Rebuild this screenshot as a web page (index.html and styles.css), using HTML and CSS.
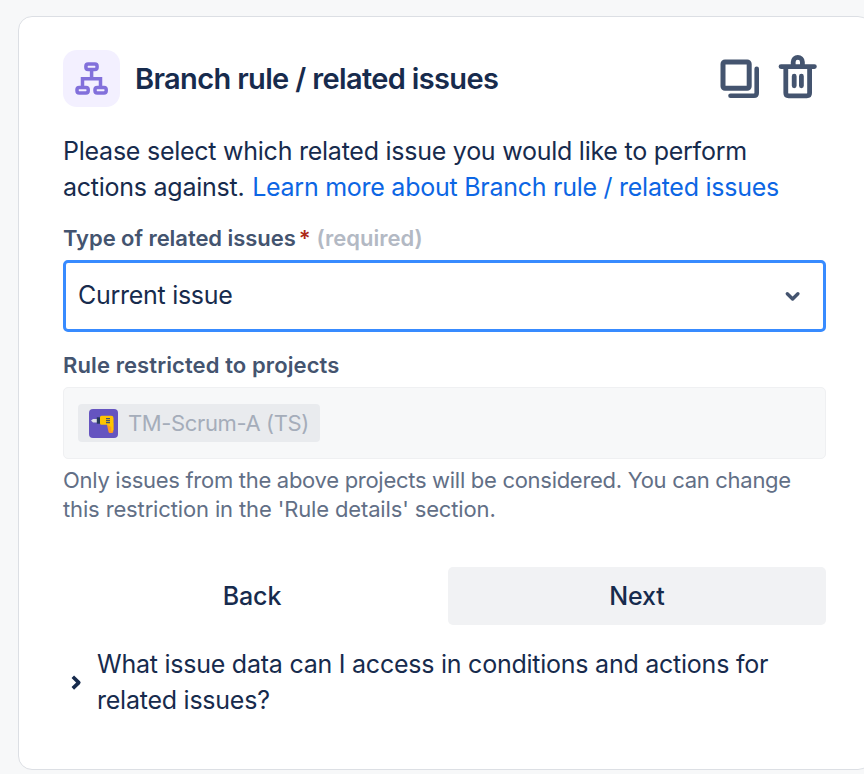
FILE: index.html
```html
<!DOCTYPE html>
<html lang="en">
<head>
<meta charset="utf-8">
<title>Branch rule / related issues</title>
<link rel="stylesheet" href="styles.css">
</head>
<body>
<main class="card">
  <header class="header">
    <span class="badge">
      <svg width="57" height="57" viewBox="0 0 57 57" fill="none" stroke="#8270db" stroke-width="3.5">
        <rect x="22.9" y="14" width="11.2" height="5.4" rx="2.2"/>
        <rect x="14" y="37.4" width="11.2" height="5.6" rx="2.2"/>
        <rect x="32" y="37.4" width="11.2" height="5.6" rx="2.2"/>
        <path d="M28.6 20v9M19.5 37v-8.2h18V37"/>
      </svg>
    </span>
    <h1 class="title">Branch rule / related issues</h1>
    <div class="actions">
      <button class="icon-btn" aria-label="Copy">
        <svg width="58" height="58" viewBox="0 0 58 58" fill="none" stroke="#44546f" stroke-width="5" stroke-linecap="round" stroke-linejoin="round">
          <rect x="13" y="12" width="26.2" height="26.2" rx="2"/>
          <path d="M46.7 18.7V43q0 2.7-2.7 2.7H20.5" stroke-width="4.6"/>
        </svg>
      </button>
      <button class="icon-btn" aria-label="Delete">
        <svg width="58" height="58" viewBox="0 0 58 58" fill="none" stroke="#44546f" stroke-width="4.8" stroke-linecap="round" stroke-linejoin="round">
          <path d="M13 16.6h33.4M17.8 17v26q0 2.8 2.8 2.8h18.2q2.8 0 2.8-2.8V17M25.2 15v-3a4.6 4.6 0 0 1 9.2 0V15M26.2 26.2v9.6M33.4 26.2v9.6"/>
        </svg>
      </button>
    </div>
  </header>

  <p class="intro">Please select which related issue you would like to perform<br>actions against. <a class="link" href="#">Learn more about Branch rule / related issues</a></p>

  <div class="label type-label">Type of related issues<span class="star">*</span><span class="required">(required)</span></div>
  <div class="select">
    <span class="select-value">Current issue</span>
    <svg width="20" height="20" viewBox="0 0 20 20" fill="none" stroke="#44546f" stroke-width="3.4" stroke-linecap="round" stroke-linejoin="round"><path d="M4.3 7.8l5.3 5.2 5.3-5.2"/></svg>
  </div>

  <div class="label project-label">Rule restricted to projects</div>
  <div class="projects">
    <span class="tag">
      <svg width="29" height="29" viewBox="0 0 29 29">
        <rect width="29" height="29" rx="4" fill="#6554c0"/>
        <path d="M2 11.6l2-1.6h4v3.4H4z" fill="#dfe1e6"/>
        <path d="M7.8 8.3h3.4v6.4H7.8z" fill="#253858"/>
        <path d="M18 14h6.3v8.5a1.6 1.6 0 0 1-1.6 1.6h-1.6a1.6 1.6 0 0 1-1.6-1.4L18 16z" fill="#ff991f"/>
        <path d="M12.5 6.8h9.8a2.2 2.2 0 0 1 2.2 2.2v12l-2.2 1.5V18L18 15.8h-5.5a1.5 1.5 0 0 1-1.5-1.5V8.3a1.5 1.5 0 0 1 1.5-1.5z" fill="#ffc400"/>
        <path d="M17 9.6h4M17 11.6h4M17 13.6h4" stroke="#42526e" stroke-width="1.1"/>
      </svg>
      <span>TM-Scrum-A (TS)</span>
    </span>
  </div>
  <p class="help">Only issues from the above projects will be considered. You can change<br><span class="help-end">this restriction in the 'Rule details' section.</span></p>

  <div class="buttons">
    <button class="btn">Back</button>
    <button class="btn btn-next">Next</button>
  </div>

  <div class="faq">
    <svg width="26" height="26" viewBox="0 0 26 26" fill="none" stroke="#172b4d" stroke-width="3.6" stroke-linejoin="round"><path d="M9.8 7.8l6 5.8-6 5.8"/></svg>
    <span class="faq-text">What issue data can I access in conditions and actions for<br>related issues?</span>
  </div>
</main>
</body>
</html>
```
FILE: styles.css
```css
* {
  box-sizing: border-box;
}

body {
  margin: 0;
  padding: 16px 0 0 18px;
  height: 774px;
  overflow: hidden;
  background: #f7f8f9;
  color: #172b4d;
  font-family: Inter, "Liberation Sans", sans-serif;
  font-size: 25px;
  white-space: nowrap;
}

h1, p {
  margin: 0;
}

button {
  padding: 0;
  border: 0;
  background: none;
  color: inherit;
  font: inherit;
}

svg {
  display: block;
  flex: none;
}

.card {
  width: 854px;
  height: 754px;
  padding: 33px 45px 0 44px;
  border: 1px solid #dcdfe4;
  border-radius: 14px;
  background: #fff;
}

.header {
  display: flex;
  align-items: center;
  height: 57px;
}

.badge {
  border-radius: 14px;
  background: #f3f0ff;
}

.title {
  margin-left: 15px;
  font-size: 29px;
  font-weight: 600;
  letter-spacing: -0.65px;
}

.actions {
  display: flex;
  margin-left: auto;
}

.icon-btn {
  width: 58px;
  height: 58px;
}

.intro {
  margin-top: 26px;
  line-height: 36px;
  letter-spacing: -0.25px;
}

.link {
  margin-left: 1px;
  color: #0c66e4;
  text-decoration: none;
  letter-spacing: -0.26px;
}

.label {
  color: #44546f;
  font-size: 22px;
  font-weight: 600;
  line-height: 28px;
}

.type-label {
  display: flex;
  margin-top: 19px;
  letter-spacing: -0.05px;
}

.star {
  margin-left: 3px;
  color: #ae2a19;
}

.required {
  margin-left: 6px;
  color: #b3b9c4;
  letter-spacing: 0;
}

.select {
  display: flex;
  align-items: center;
  justify-content: space-between;
  width: 763px;
  height: 72px;
  margin-top: 8px;
  padding: 0 20px 0 12px;
  border: 3px solid #388bff;
  border-radius: 5px;
}

.select-value {
  padding-bottom: 2px;
  letter-spacing: -0.28px;
}

.project-label {
  margin-top: 19px;
  letter-spacing: 0.1px;
}

.projects {
  display: flex;
  align-items: center;
  width: 763px;
  height: 72px;
  margin-top: 8px;
  padding-left: 14px;
  border: 1px solid #eff0f2;
  border-radius: 5px;
  background: #f7f8f9;
}

.tag {
  display: flex;
  align-items: center;
  gap: 10px;
  width: 242px;
  height: 38px;
  padding-left: 11px;
  border-radius: 4px;
  background: #e9ebee;
  color: #a5adba;
  font-size: 22px;
  letter-spacing: -0.37px;
}

.help {
  margin-top: 7px;
  color: #626f86;
  font-size: 22px;
  line-height: 29px;
  letter-spacing: -0.29px;
}

.help-end {
  letter-spacing: -0.14px;
}

.buttons {
  display: grid;
  grid-template-columns: 378px 378px;
  gap: 7px;
  margin-top: 43px;
}

.btn {
  height: 58px;
  border-radius: 5px;
  font-weight: 500;
  letter-spacing: -0.15px;
}

.btn-next {
  background: #f1f2f4;
}

.faq {
  display: flex;
  align-items: center;
  gap: 8px;
  margin-top: 21px;
  line-height: 36px;
  letter-spacing: -0.24px;
}
```
